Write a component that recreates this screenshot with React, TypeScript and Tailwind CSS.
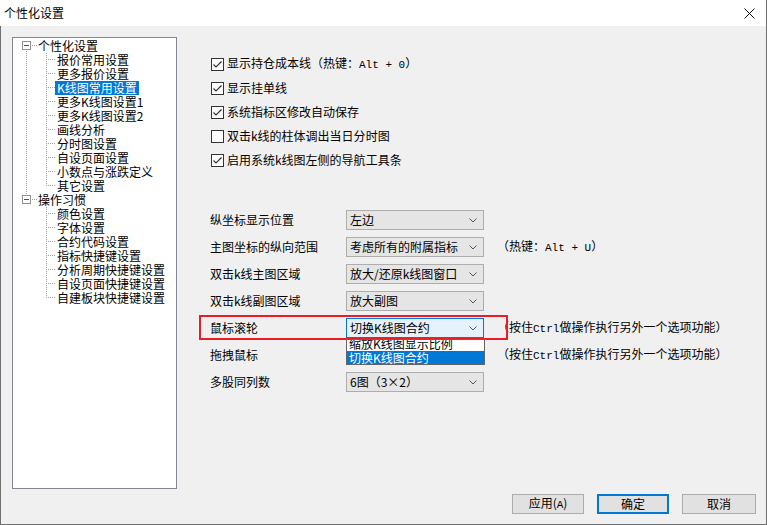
import React from 'react'

const DOT = { stroke: '#a0a0a0', strokeDasharray: '1 1', shapeRendering: 'crispEdges' as const }

const tree = [
  {
    label: '个性化设置',
    children: ['报价常用设置', '更多报价设置', 'K线图常用设置', '更多K线图设置1', '更多K线图设置2', '画线分析', '分时图设置', '自设页面设置', '小数点与涨跌定义', '其它设置'],
  },
  {
    label: '操作习惯',
    children: ['颜色设置', '字体设置', '合约代码设置', '指标快捷键设置', '分析周期快捷键设置', '自设页面快捷键设置', '自建板块快捷键设置'],
  },
]

const checks = [
  { on: true, text: '显示持仓成本线（热键：', key: 'Alt + 0', tail: '）' },
  { on: true, text: '显示挂单线' },
  { on: true, text: '系统指标区修改自动保存' },
  { on: false, text: '双击k线的柱体调出当日分时图' },
  { on: true, text: '启用系统k线图左侧的导航工具条' },
]

// the 拖拽鼠标 box sits under the open list, so its value is not shown
const rows = [
  { label: '纵坐标显示位置', value: '左边' },
  { label: '主图坐标的纵向范围', value: '考虑所有的附属指标', hint: 'alt' },
  { label: '双击k线主图区域', value: '放大/还原k线图窗口' },
  { label: '双击k线副图区域', value: '放大副图' },
  { label: '鼠标滚轮', value: '切换K线图合约', hint: 'ctrl', open: true },
  { label: '拖拽鼠标', value: '', hint: 'ctrl' },
  { label: '多股同列数', value: '6图（3×2）' },
]

function Mono({ children }: { children: React.ReactNode }) {
  return <span className="font-['Liberation_Mono',monospace] text-[11px]">{children}</span>
}

function Chevron() {
  return (
    <svg width="8" height="5" viewBox="0 0 8 5" className="shrink-0">
      <polyline points="0.5,0.5 4,4 7.5,0.5" fill="none" stroke="#555" strokeWidth="1" />
    </svg>
  )
}

function CheckBox({ on }: { on: boolean }) {
  return (
    <svg width="13" height="13" viewBox="0 0 13 13" className="shrink-0">
      <rect x="0.5" y="0.5" width="12" height="12" fill="white" stroke="#333" shapeRendering="crispEdges" />
      {on && <polyline points="2.5,6.5 5,9 10.5,3.5" fill="none" stroke="#333" strokeWidth="1.2" />}
    </svg>
  )
}

function RootRow({ label, first, hasNext }: { label: string; first: boolean; hasNext: boolean }) {
  return (
    <div className="flex h-[14px] items-center">
      <svg width="25" height="14" className="shrink-0">
        {!first && <line x1="13.5" y1="0" x2="13.5" y2="2" {...DOT} />}
        {hasNext && <line x1="13.5" y1="12" x2="13.5" y2="14" {...DOT} />}
        <rect x="9.5" y="2.5" width="8" height="8" fill="white" stroke="#919191" shapeRendering="crispEdges" />
        <line x1="11" y1="6.5" x2="16" y2="6.5" stroke="#2a52a0" shapeRendering="crispEdges" />
        <line x1="19" y1="6.5" x2="25" y2="6.5" {...DOT} />
      </svg>
      <span className="leading-[14px] whitespace-nowrap">{label}</span>
    </div>
  )
}

function ChildRow({ label, parentNext, last }: { label: string; parentNext: boolean; last: boolean }) {
  const selected = label === 'K线图常用设置'
  return (
    <div className="flex h-[14px] items-center">
      <svg width="42" height="14" className="shrink-0">
        {parentNext && <line x1="13.5" y1="0" x2="13.5" y2="14" {...DOT} />}
        <line x1="33.5" y1="0" x2="33.5" y2={last ? 7 : 14} {...DOT} />
        <line x1="35" y1="6.5" x2="42" y2="6.5" {...DOT} />
      </svg>
      <span className={`leading-[14px] px-[2px] whitespace-nowrap ${selected ? 'bg-[#0078d7] text-white' : ''}`}>{label}</span>
    </div>
  )
}

export default function App() {
  return (
    <div className="w-[767px] h-[525px] flex flex-col border-r border-[#707070] text-[12px] text-black font-['Noto_Sans_CJK_SC','Noto_Sans',sans-serif]">
      {/* title bar */}
      <div className="h-[26px] bg-white flex items-center justify-between pl-[4px] pr-[11px]">
        <span className="text-[12px] leading-none">个性化设置</span>
        <svg width="11" height="11" viewBox="0 0 11 11">
          <path d="M0.5 0.5 L10.5 10.5 M10.5 0.5 L0.5 10.5" stroke="#111" strokeWidth="1" />
        </svg>
      </div>

      <div className="flex-1 flex bg-[#f0f0f0] border-l border-b border-[#707070]">
        {/* tree */}
        <div className="ml-[11px] mt-[11px] w-[165px] h-[452px] shrink-0 border border-[#828790] bg-white pt-px">
          {tree.map((g, gi) => {
            const hasNext = gi < tree.length - 1
            return (
              <div key={g.label}>
                <RootRow label={g.label} first={gi === 0} hasNext={hasNext} />
                {g.children.map((c, ci) => (
                  <ChildRow key={c} label={c} parentNext={hasNext} last={ci === g.children.length - 1} />
                ))}
              </div>
            )
          })}
        </div>

        {/* right side */}
        <div className="flex-1 flex flex-col">
          <div className="ml-[34px] mt-[26px] flex flex-col">
            {checks.map((c) => (
              <div key={c.text} className="h-[24px] flex items-center gap-[3px] whitespace-nowrap">
                <CheckBox on={c.on} />
                <span>
                  {c.text}
                  {c.key && <Mono>{c.key}</Mono>}
                  {c.tail}
                </span>
              </div>
            ))}
          </div>

          <div className="ml-[33px] mt-[38px] flex flex-col gap-[7px]">
            {rows.map((r) => (
              <div key={r.label} className="relative h-[20px] flex items-center">
                <span className="w-[136px] shrink-0 whitespace-nowrap">{r.label}</span>
                <div
                  className={`relative w-[138px] h-[20px] shrink-0 flex items-center justify-between pl-[3px] pr-[6px] border ${
                    r.open ? 'bg-[#e5f1fb] border-[#0078d7]' : 'bg-[#e5e5e5] border-[#adadad]'
                  }`}
                >
                  <span className="whitespace-nowrap leading-none">{r.value}</span>
                  <Chevron />
                  {r.open && (
                    <div className="absolute z-20 left-[-1px] top-[20px] w-[139px] h-[26px] overflow-hidden bg-white border border-[#646464]">
                      <div className="mt-[-4px]">
                        <div className="h-[15px] leading-[15px] pl-[2px] whitespace-nowrap">缩放K线图显示比例</div>
                        <div className="h-[14px] leading-[14px] pl-[2px] bg-[#0078d7] text-white whitespace-nowrap">切换K线图合约</div>
                      </div>
                    </div>
                  )}
                </div>
                {r.hint === 'alt' && (
                  <span className="ml-[13px] whitespace-nowrap">
                    （热键：<Mono>Alt + U</Mono>）
                  </span>
                )}
                {r.hint === 'ctrl' && (
                  <span className="ml-[13px] whitespace-nowrap">
                    （按住<Mono>Ctrl</Mono>做操作执行另外一个选项功能）
                  </span>
                )}
                {r.open && (
                  <div className="absolute z-10 left-[-11px] top-[-3px] w-[309px] h-[25px] border-2 border-[#ed1c24] pointer-events-none" />
                )}
              </div>
            ))}
          </div>

          <div className="mt-auto mb-[10px] mr-[10px] self-end flex gap-[13px]">
            <button className="w-[72px] h-[20px] bg-[#e1e1e1] border border-[#adadad] leading-none">
              应用(<Mono>A</Mono>)
            </button>
            <button className="w-[72px] h-[20px] bg-[#e1e1e1] border-2 border-[#0078d7] leading-none">确定</button>
            <button className="w-[74px] h-[20px] bg-[#e1e1e1] border border-[#adadad] leading-none">取消</button>
          </div>
        </div>
      </div>
    </div>
  )
}
